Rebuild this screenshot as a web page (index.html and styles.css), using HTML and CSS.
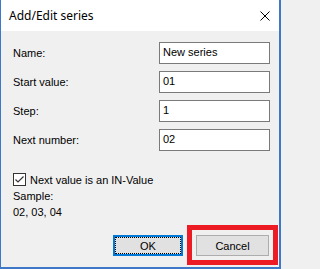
FILE: index.html
```html
<!DOCTYPE html>
<html>
<head>
<meta charset="utf-8">
<link rel="stylesheet" href="styles.css">
</head>
<body>
<div class="window">
  <div class="titlebar">
    <span class="title">Add/Edit series</span>
    <svg class="close" width="10" height="10" viewBox="0 0 10 10"><path d="M0.5 0.5 L9.5 9.5 M9.5 0.5 L0.5 9.5" stroke="#000" stroke-width="1" fill="none"/></svg>
  </div>
  <div class="content">
    <div class="form">
      <div class="label">Name:</div><div class="field">New series</div>
      <div class="label">Start value:</div><div class="field">01</div>
      <div class="label">Step:</div><div class="field">1</div>
      <div class="label">Next number:</div><div class="field">02</div>
    </div>
    <div class="check-row">
      <svg class="checkbox" width="13" height="13" viewBox="0 0 13 13"><rect x="0.5" y="0.5" width="12" height="12" fill="#fff" stroke="#333"/><path d="M2.5 6.5 L5 9 L10.5 3.5" stroke="#333" stroke-width="1.2" fill="none"/></svg>
      <span>Next value is an IN-Value</span>
    </div>
    <div class="sample">
      <div>Sample:</div>
      <div>02, 03, 04</div>
    </div>
    <div class="buttons">
      <div class="btn btn-default"><span class="focus">OK</span></div>
      <div class="btn-wrap">
        <div class="btn">Cancel</div>
        <div class="highlight"></div>
      </div>
    </div>
  </div>
</div>
</body>
</html>
```
FILE: styles.css
```css
html, body {
  margin: 0;
  padding: 0;
  background: #f0f0f0;
}
.window {
  width: 281px;
  height: 269px;
  box-sizing: border-box;
  border-left: 1px solid #3f77c9;
  border-right: 2px solid #3f77c9;
  border-bottom: 2px solid #3f77c9;
  display: flex;
  flex-direction: column;
  font-family: "Liberation Sans", Arial, sans-serif;
  font-size: 11px;
  color: #000;
}
.titlebar {
  height: 31px;
  flex: none;
  background: #fff;
  display: flex;
  align-items: center;
  justify-content: space-between;
  padding: 0 9px 0 8px;
}
.title {
  font-family: "Noto Sans", sans-serif;
  font-size: 12px;
  margin-top: -1px;
}
.close {
  display: block;
}
.content {
  flex: 1;
  background: #f0f0f0;
  display: flex;
  flex-direction: column;
  padding: 11px 10px 11px 12px;
}
.form {
  display: grid;
  grid-template-columns: 146px 111px;
  grid-auto-rows: 22px;
  row-gap: 7px;
  align-items: center;
}
.field {
  box-sizing: border-box;
  height: 22px;
  border: 1px solid #7a7a7a;
  background: #fff;
  padding: 0 3px;
  line-height: 16px;
  padding-top: 1px;
}
.check-row {
  margin-top: 22px;
  display: flex;
  align-items: center;
  height: 13px;
}
.checkbox {
  display: block;
  margin-right: 4px;
}
.sample {
  margin-top: 2px;
  line-height: 16px;
}
.buttons {
  margin-top: auto;
  display: flex;
  justify-content: flex-end;
  gap: 13px;
}
.btn {
  box-sizing: border-box;
  width: 73px;
  height: 21px;
  border: 1px solid #adadad;
  background: #e1e1e1;
  display: flex;
  align-items: center;
  justify-content: center;
}
.btn-default {
  width: 70px;
  border: 2px solid #0078d7;
  padding: 0;
}
.btn-default .focus {
  flex: 1;
  align-self: stretch;
  display: flex;
  align-items: center;
  justify-content: center;
  border: 1px dotted #000;
}
.btn-wrap {
  position: relative;
}
.highlight {
  position: absolute;
  left: -9px;
  top: -10px;
  width: 91px;
  height: 40px;
  box-sizing: border-box;
  border: 5px solid #ed1c24;
}
```
